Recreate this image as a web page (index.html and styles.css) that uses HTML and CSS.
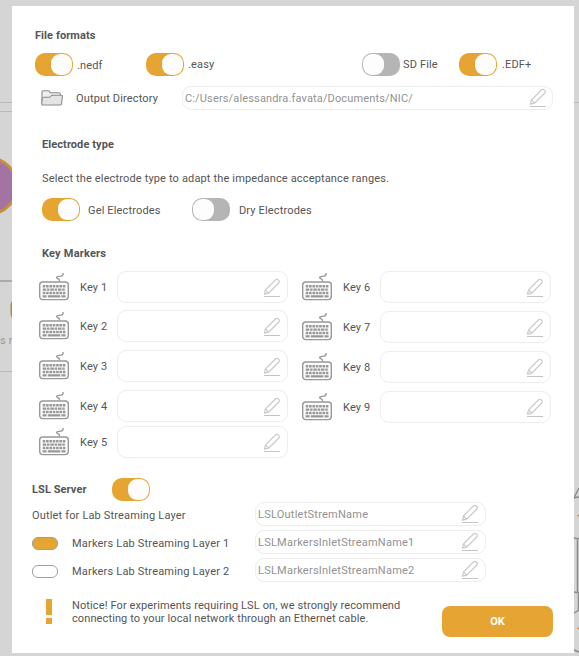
FILE: index.html
```html
<!DOCTYPE html>
<html lang="en">
<head>
    <meta charset="UTF-8">
    <meta name="viewport" content="width=device-width, initial-scale=1.0">
    <title>Settings</title>
    <link rel="stylesheet" href="styles.css">
</head>
<body>
    <!-- shared icons -->
    <svg class="defs" width="0" height="0">
        <symbol id="pencil" viewBox="0 0 18 20">
            <path d="M1.5 16.2 L2.4 12 L12.6 1.8 Q14 .7 15.5 2.1 Q17 3.5 15.8 5 L5.6 15.2 Z M2.4 12 L5.6 15.2" fill="none" stroke="#cbcbcb" stroke-width="1.2"/>
            <path d="M1 18.5 H17" stroke="#c4c4c4"/>
        </symbol>
        <symbol id="keyboard" viewBox="0 0 30 29">
            <path d="M20.5 9.5 V8.5 Q20.5 7 18.5 6.5 Q16.5 5.5 18.5 4.7 L22 4.2 Q24.2 3.8 24.2 1" fill="none" stroke="#989898" stroke-width="1.3"/>
            <rect x=".7" y="10" width="28.6" height="17.6" rx="3" fill="#fff" stroke="#989898" stroke-width="1.4"/>
            <path d="M3.7 14.2 H26.6" stroke="#989898" stroke-width="2.4" stroke-dasharray="2.6 .75"/>
            <path d="M3.7 17.6 H26.6" stroke="#989898" stroke-width="2.3" stroke-dasharray="3.6 .75 2.5 .75"/>
            <path d="M3.7 21 H26.6" stroke="#989898" stroke-width="2.3" stroke-dasharray="2.6 .75"/>
            <path d="M3.5 24.4 H7.6 M8.8 24.4 H21.3 M22.4 24.4 H26.6" stroke="#989898" stroke-width="2.3"/>
        </symbol>
    </svg>

    <!-- page behind the dialog -->
    <svg class="backdrop" width="579" height="656">
        <path d="M0 102.5 H579 M0 111.5 H12" stroke="#bababa"/>
        <path d="M0 281 H12" stroke="#aaa" stroke-width="2"/>
        <path d="M0 371.5 H12" stroke="#b8b8b8"/>
        <circle cx="-11" cy="186" r="28" fill="#a374a1" stroke="#c4923a" stroke-width="3"/>
        <rect x="11.5" y="300" width="30" height="19" rx="5" fill="none" stroke="#b58a45" stroke-width="2"/>
        <text x="0" y="344" class="backdrop-text">s r</text>
        <path d="M574 497.5 L579 488 M574 498 Q577 497 579 497 M574 538 L579 539 M577.5 540 V593 M574 592 L579 593 M578.5 594 V610 M574 613 L579 610 M574 650 L579 652" fill="none" stroke="#888" stroke-width="1.4"/>
        <path d="M577 515.5 H579 M577 628.5 H579" stroke="#c99a50" stroke-width="1.5"/>
    </svg>

    <main class="dialog">
        <h2 class="title title-files">File formats</h2>
        <div class="formats">
            <span class="toggle on"></span><label class="nedf">.nedf</label>
            <span class="toggle on"></span><label class="easy">.easy</label>
            <span class="toggle"></span><label class="sd">SD File</label>
            <span class="toggle on"></span><label class="edf">.EDF+</label>
        </div>
        <div class="output">
            <svg class="folder" width="22" height="16" viewBox="0 0 22 16">
                <path d="M1 14 V2 Q1 .7 2.3 .7 H7.5 Q8.5 .7 9 2.7 H18.3 Q19.5 2.7 19.5 5" fill="#eee" stroke="#8c8c8c" stroke-width="1.1"/>
                <path d="M1.5 15 Q.5 15 .8 13 L1.3 8.5 Q1.5 7.3 3 7.3 H8 Q9.5 7.3 10 5.9 Q10.3 5.2 12 5.2 H20.5 Q21.6 5.2 21.4 6.5 L20.6 13.8 Q20.5 15 19.5 15 Z" fill="#e4e4e4" stroke="#8c8c8c" stroke-width="1.1"/>
            </svg>
            <label>Output Directory</label>
            <div class="field"><span>C:/Users/alessandra.favata/Documents/NIC/</span><svg class="pencil"><use href="#pencil"/></svg></div>
        </div>

        <h2 class="title title-electrode">Electrode type</h2>
        <p class="hint">Select the electrode type to adapt the impedance acceptance ranges.</p>
        <div class="electrodes">
            <span class="toggle on"></span><label class="gel">Gel Electrodes</label>
            <span class="toggle"></span><label>Dry Electrodes</label>
        </div>

        <h2 class="title title-keys">Key Markers</h2>
        <div class="keys">
            <div class="key-col">
                <div class="key"><svg class="keyboard"><use href="#keyboard"/></svg><label>Key 1</label><div class="field"><svg class="pencil"><use href="#pencil"/></svg></div></div>
                <div class="key"><svg class="keyboard"><use href="#keyboard"/></svg><label>Key 2</label><div class="field"><svg class="pencil"><use href="#pencil"/></svg></div></div>
                <div class="key"><svg class="keyboard"><use href="#keyboard"/></svg><label>Key 3</label><div class="field"><svg class="pencil"><use href="#pencil"/></svg></div></div>
                <div class="key"><svg class="keyboard"><use href="#keyboard"/></svg><label>Key 4</label><div class="field"><svg class="pencil"><use href="#pencil"/></svg></div></div>
                <div class="key"><svg class="keyboard"><use href="#keyboard"/></svg><label>Key 5</label><div class="field"><svg class="pencil"><use href="#pencil"/></svg></div></div>
            </div>
            <div class="key-col right">
                <div class="key"><svg class="keyboard"><use href="#keyboard"/></svg><label>Key 6</label><div class="field"><svg class="pencil"><use href="#pencil"/></svg></div></div>
                <div class="key"><svg class="keyboard"><use href="#keyboard"/></svg><label>Key 7</label><div class="field"><svg class="pencil"><use href="#pencil"/></svg></div></div>
                <div class="key"><svg class="keyboard"><use href="#keyboard"/></svg><label>Key 8</label><div class="field"><svg class="pencil"><use href="#pencil"/></svg></div></div>
                <div class="key"><svg class="keyboard"><use href="#keyboard"/></svg><label>Key 9</label><div class="field"><svg class="pencil"><use href="#pencil"/></svg></div></div>
            </div>
        </div>

        <div class="server">
            <h2 class="title">LSL Server</h2>
            <span class="toggle on"></span>
        </div>
        <div class="streams">
            <div class="stream">
                <label class="outlet">Outlet for Lab Streaming Layer</label>
                <div class="field"><span>LSLOutletStremName</span><svg class="pencil"><use href="#pencil"/></svg></div>
            </div>
            <div class="stream">
                <span class="pill on"></span>
                <label>Markers Lab Streaming Layer 1</label>
                <div class="field"><span>LSLMarkersInletStreamName1</span><svg class="pencil"><use href="#pencil"/></svg></div>
            </div>
            <div class="stream">
                <span class="pill"></span>
                <label>Markers Lab Streaming Layer 2</label>
                <div class="field"><span>LSLMarkersInletStreamName2</span><svg class="pencil"><use href="#pencil"/></svg></div>
            </div>
        </div>

        <div class="footer">
            <div class="mark"></div>
            <p class="notice">Notice! For experiments requiring LSL on, we strongly recommend<br>connecting to your local network through an Ethernet cable.</p>
            <button class="ok">OK</button>
        </div>
    </main>
</body>
</html>
```
FILE: styles.css
```css
* {
    box-sizing: border-box;
}

body {
    margin: 0;
    height: 656px;
    padding: 6px 5px 3px 12px;
    overflow: hidden;
    background-color: #d5d5d5;
    color: #555;
    font-family: Roboto, "Liberation Sans", sans-serif;
    font-size: 11px;
    line-height: 14px;
    letter-spacing: 0.15px;
}

.defs,
.backdrop {
    position: absolute;
    left: 0;
    top: 0;
}

.backdrop-text {
    font-size: 11px;
    fill: #999;
}

.dialog {
    position: relative;
    width: 562px;
    height: 647px;
    padding-top: 23px;
    background-color: #fff;
}

.title {
    margin: 0;
    font-size: 11px;
    font-weight: 700;
    letter-spacing: 0.08px;
    height: 14px;
}

label {
    white-space: nowrap;
}

.title-files {
    margin-left: 23px;
}

/* switches */
.toggle {
    display: flex;
    flex: none;
    width: 38px;
    height: 23px;
    padding: 1px;
    border-radius: 10px;
    background-color: #b5b5b5;
}

.toggle::before {
    content: "";
    width: 21px;
    height: 21px;
    border-radius: 9px;
    background-color: #fdfdfd;
}

.toggle.on {
    justify-content: flex-end;
    background-color: #e6a532;
}

.formats {
    display: flex;
    align-items: center;
    height: 23px;
    margin: 10px 0 0 23px;
}

.formats label {
    padding-left: 4px;
}

.formats .nedf {
    width: 73px;
    padding-top: 2px;
}

.formats .easy {
    width: 178px;
}

.formats .sd {
    width: 59px;
    padding-left: 3px;
}

.formats .edf {
    padding-left: 5px;
}

/* text boxes with an edit icon */
.field {
    display: flex;
    flex: none;
    align-items: center;
    justify-content: flex-end;
    height: 24px;
    border: 1px solid #ededed;
    border-radius: 9px;
    padding: 0 5px 0 2px;
    color: #929292;
}

.field span {
    flex: 1;
    padding-top: 2px;
}

.pencil {
    flex: none;
    width: 18px;
    height: 20px;
}

.output {
    display: flex;
    align-items: center;
    height: 24px;
    margin: 10px 0 0 29px;
}

.output label {
    width: 106px;
    margin-left: 13px;
    padding-top: 2px;
}

.output .field {
    width: 371px;
}

.title-electrode {
    margin: 28px 0 0 30px;
}

.hint {
    margin: 20px 0 0 30px;
}

.electrodes {
    display: flex;
    align-items: center;
    margin: 12px 0 0 30px;
}

.electrodes label {
    padding: 2px 0 0 9px;
}

.electrodes .gel {
    width: 112px;
    padding-left: 8px;
}

.title-keys {
    margin: 26px 0 0 30px;
    letter-spacing: 0.2px;
}

.keys {
    display: flex;
    gap: 14px;
    height: 187px;
    margin: 10px 0 0 27px;
}

.key-col {
    display: flex;
    flex-direction: column;
    gap: 8px;
}

.key {
    display: flex;
    align-items: center;
    height: 32px;
}

.key-col:not(.right) .key:nth-child(2) {
    margin-top: -1px;
}

.key:nth-child(5) {
    margin-top: -4px;
}

.keyboard {
    width: 30px;
    height: 29px;
    margin-bottom: 2px;
}

.key label {
    width: 37px;
    margin-left: 11px;
    padding-top: 2px;
}

.key .field {
    width: 171px;
    height: 32px;
    padding: 1px 6px 0 2px;
}

.server {
    display: flex;
    align-items: center;
    margin: 20px 0 0 20px;
}

.server .title {
    width: 80px;
}

.streams {
    display: grid;
    gap: 4px;
    margin: 1px 0 0 20px;
}

.stream {
    display: flex;
    align-items: center;
    height: 24px;
}

.stream label {
    width: 183px;
    padding-top: 4px;
    letter-spacing: 0.19px;
}

.stream .outlet {
    width: 223px;
    letter-spacing: 0.16px;
}

.stream .field {
    width: 231px;
    padding-right: 6px;
    letter-spacing: 0.24px;
}

.pill {
    width: 26px;
    height: 13px;
    margin: 2px 14px 0 0;
    border: 1px solid #a0a0a0;
    border-radius: 6px;
}

.pill.on {
    background-color: #e6a532;
}

.footer {
    display: flex;
    margin: 17px 0 0 34px;
}

/* exclamation mark */
.mark {
    width: 6px;
    height: 25px;
    background: linear-gradient(#e6a532 16px, #fff 16px, #fff 19px, #e6a532 19px);
}

.notice {
    width: 370px;
    margin: 0 0 0 20px;
    line-height: 13px;
    letter-spacing: 0.11px;
}

.ok {
    width: 111px;
    height: 31px;
    margin-top: 7px;
    border: none;
    border-radius: 8px;
    background-color: #e6a532;
    color: #fff;
    font: 700 11px Roboto, "Liberation Sans", sans-serif;
}
```
